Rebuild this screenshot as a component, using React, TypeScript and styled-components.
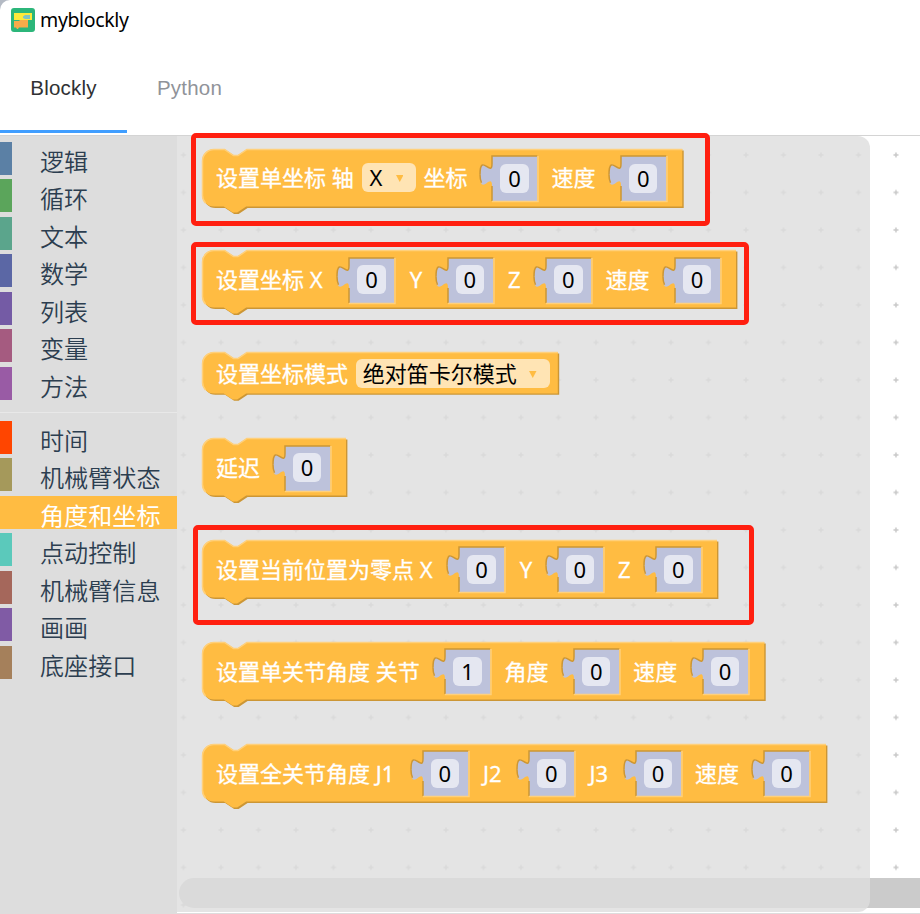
import React from 'react';
import styled, { createGlobalStyle } from 'styled-components';

const ORANGE = '#ffbc42';
const ORANGE_DARK = '#cc9635';
const ORANGE_LIGHT = '#ffd07b';
const SHADOW = '#bdc2db';
const CJK = "'Noto Sans', 'Noto Sans CJK SC', sans-serif";

const GlobalStyle = createGlobalStyle`
  *, *::before, *::after { box-sizing: border-box; }
  body { margin: 0; background: #b4bac4; overflow: hidden; }
`;

const Window = styled.div`
  width: 920px;
  height: 914px;
  display: flex;
  flex-direction: column;
  background: #fff;
  border-top-left-radius: 10px;
  overflow: hidden;
  font-family: ${CJK};
`;

const TitleBar = styled.header`
  height: 42px;
  flex: none;
  display: flex;
  align-items: center;
  gap: 5px;
  padding: 0 0 2px 11px;
  font-size: 19.5px;
  color: #000;

  svg { flex: none; }
`;

const AppName = styled.span`
  line-height: 24px;
  letter-spacing: -0.35px;
`;

const TabBar = styled.nav`
  height: 93px;
  flex: none;
  display: flex;
  padding-bottom: 2px;
`;

const Tab = styled.button<{ $active?: boolean }>`
  width: ${(p) => (p.$active ? 127 : 125)}px;
  border: 0;
  border-bottom: 3px solid ${(p) => (p.$active ? '#409eff' : 'transparent')};
  background: none;
  padding: 4px 0 0;
  font: 20.5px 'Liberation Sans', Arial, sans-serif;
  letter-spacing: 0.2px;
  color: ${(p) => (p.$active ? '#303133' : '#909399')};
`;

const Main = styled.main`
  height: 779px;
  display: flex;
`;

const Toolbox = styled.aside`
  width: 177px;
  flex: none;
  background: #ddd;
  border-top: 1px solid #d4d4d4;
  padding-top: 5.6px;
`;

const Category = styled.div<{ $color: string; $selected?: boolean }>`
  height: 33px;
  margin-bottom: 4.5px;
  display: flex;
  align-items: center;
  padding: 6px 0 0 28px;
  border-left: 12px solid ${(p) => p.$color};
  background: ${(p) => (p.$selected ? p.$color : 'transparent')};
  color: ${(p) => (p.$selected ? '#fff' : '#2c3e50')};
  font-size: 24.1px;
  font-weight: ${(p) => (p.$selected ? 400 : 350)};
  line-height: 33px;
  white-space: nowrap;
`;

const Divider = styled.hr`
  height: 1px;
  margin: 12px 0 8px;
  border: 0;
  background: #e8e8e8;
`;

const Workspace = styled.section`
  position: relative;
  flex: 1;
  border-top: 1.5px solid #d4d4d4;
  border-bottom: 1.5px solid #ddd;
  background: #fff;
`;

const Grid = styled.svg`
  position: absolute;
  inset: 0;
  width: 100%;
  height: 100%;
`;

const Scrollbar = styled.div`
  position: absolute;
  left: 1.5px;
  right: -20px;
  bottom: 5px;
  height: 30px;
  border-radius: 15px;
  background: #cbcbcb;
`;

const WorkspaceClip = styled.div`
  position: absolute;
  inset: 0;
  overflow: hidden;
`;

const Flyout = styled.div`
  position: relative;
  width: 693px;
  height: 776px;
  padding: 12.5px 0 0 24.5px;
  display: flex;
  flex-direction: column;
  align-items: flex-start;
  gap: 44.3px;
  background: rgba(221, 221, 221, 0.8);
  border-radius: 0 12px 12px 0;
`;

const BlockBody = styled.div<{ $height: number; $width: number }>`
  position: relative;
  display: flex;
  align-items: flex-start;
  width: ${(p) => p.$width}px;
  height: ${(p) => p.$height}px;
  padding-left: 14.5px;
`;

const BlockShape = styled.svg`
  position: absolute;
  left: 0;
  top: 0;
  overflow: visible;
`;

const Label = styled.span<{ $width: number; $top: number; $indent: number }>`
  position: relative;
  width: ${(p) => p.$width}px;
  margin-top: ${(p) => p.$top}px;
  text-indent: ${(p) => p.$indent}px;
  flex: none;
  font-size: 22px;
  line-height: 30px;
  color: #fff;
  -webkit-text-stroke: 0.3px #fff;
  white-space: pre;
`;

const Dropdown = styled.span<{ $width: number; $top: number }>`
  position: relative;
  width: ${(p) => p.$width}px;
  height: 29px;
  margin: ${(p) => p.$top}px 7.5px 0;
  padding: 0 13px 0 7.3px;
  flex: none;
  display: flex;
  align-items: center;
  justify-content: space-between;
  border-radius: 6px;
  background: #ffe4b4;
  font-size: 22px;
  line-height: 29px;
  color: #000;
  white-space: nowrap;

  svg { margin-top: 2px; }
`;

const Socket = styled.span`
  position: relative;
  width: 45.3px;
  height: 45px;
  margin: 7.6px 14px 0 25px;
  flex: none;
  display: flex;
  padding: 7.5px 0 0 8px;
`;

const SocketShape = styled.svg`
  position: absolute;
  left: 0;
  top: 0;
  overflow: visible;
`;

const NumberField = styled.span`
  position: relative;
  width: 28.5px;
  height: 29px;
  border-radius: 6px;
  background: #e5e7f1;
  color: #000;
  font-size: 22px;
  line-height: 29px;
  text-align: center;
`;

const Highlight = styled.div<{ $x: number; $y: number; $w: number; $h: number }>`
  position: absolute;
  left: ${(p) => p.$x}px;
  top: ${(p) => p.$y}px;
  width: ${(p) => p.$w}px;
  height: ${(p) => p.$h}px;
  border: 5px solid #ff1f10;
  border-radius: 5px;
  pointer-events: none;
`;

type Part =
  | { kind: 'label'; text: string; width: number }
  | { kind: 'menu'; text: string; width: number }
  | { kind: 'number'; value: string };

const label = (text: string, width: number): Part => ({ kind: 'label', text, width });
const menu = (text: string, width: number): Part => ({ kind: 'menu', text, width });
const num = (value = '0'): Part => ({ kind: 'number', value });

interface BlockData {
  width: number;
  height: number;
  parts: Part[];
}

const blocks: BlockData[] = [
  {
    width: 480.3,
    height: 57.6,
    parts: [label('设置单坐标 轴', 138.6), menu('X', 54), label('坐标', 43.7), num(), label('速度', 44.4), num()],
  },
  {
    width: 534,
    height: 57.6,
    parts: [label('设置坐标 X', 108.3), num(), label('Y', 14), num(), label('Z', 14.2), num(), label('速度', 44.4), num()],
  },
  { width: 355.8, height: 41.4, parts: [label('设置坐标模式', 132), menu('绝对笛卡尔模式', 194)] },
  { width: 144, height: 57.6, parts: [label('延迟', 43.7), num()] },
  {
    width: 515,
    height: 57.6,
    parts: [label('设置当前位置为零点 X', 218.3), num(), label('Y', 14), num(), label('Z', 14.2), num()],
  },
  {
    width: 562.3,
    height: 57.6,
    parts: [label('设置单关节角度 关节', 204.3), num('1'), label('角度', 44.4), num(), label('速度', 44.4), num()],
  },
  {
    width: 624,
    height: 57.6,
    parts: [
      label('设置全关节角度 J1', 181.5),
      num(),
      label('J2', 22.3),
      num(),
      label('J3', 22.3),
      num(),
      label('速度', 44.4),
      num(),
    ],
  },
];

const outline = (w: number, h: number) =>
  `M0,12 A12,12 0 0 1 12,0 H22.5 l9,6 h4.5 l9,-6 H${w} V${h} H44.2 l-9,6 h-4.5 l-9,-6 H12 a12,12 0 0 1 -12,-12 Z`;

const Block = ({ width, height, parts }: BlockData) => {
  const short = height < 50;
  const labelTop = short ? 5.8 : 13.9;
  return (
    <BlockBody $width={width} $height={height}>
      <BlockShape width={width} height={height + 8}>
        <path d={outline(width, height)} fill={ORANGE_DARK} transform="translate(1.4 1.4)" />
        <path d={outline(width, height)} fill={ORANGE} />
        <path
          d={`M3.5,${height - 3.5} A12,12 0 0 1 .5,${height - 12} V12 A11.5,11.5 0 0 1 12,.5 H22.5 l9,6 h4.5 l9,-6 H${width}`}
          fill="none"
          stroke={ORANGE_LIGHT}
          strokeWidth="1.5"
        />
      </BlockShape>
      {parts.map((part, i) => {
        if (part.kind === 'label') {
          return (
            <Label key={i} $width={part.width} $top={labelTop} $indent={i > 0 && part.width < 30 ? 1.2 : 0}>
              {part.text}
            </Label>
          );
        }
        if (part.kind === 'menu') {
          return (
            <Dropdown key={i} $width={part.width} $top={short ? 6.6 : 14.3}>
              <span>{part.text}</span>
              <svg width="7.5" height="7" viewBox="0 0 7.5 7">
                <path d="M0,0 H7.5 L3.75,7 Z" fill={ORANGE} />
              </svg>
            </Dropdown>
          );
        }
        return (
          <Socket key={i}>
            <SocketShape width="46" height="45">
              <path
                d="M0,0 H45.3 V45 H0 V30 c0,-15 -12,12 -12,-11.25 s12,3.75 12,-11.25 Z"
                fill={SHADOW}
              />
              <path
                d="M45.3,0 H0 V7.5 c0,15 -12,-12 -12,11.25"
                fill="none"
                stroke={ORANGE_DARK}
                strokeWidth="1.5"
              />
              <path d="M-12,18.75 q0,5 1.5,8 M0,30 V45" fill="none" stroke={ORANGE_DARK} strokeWidth="1.5" />
              <path d="M46,0 V45.5 H0" fill="none" stroke={ORANGE_LIGHT} strokeWidth="1.5" />
            </SocketShape>
            <NumberField>{part.value}</NumberField>
          </Socket>
        );
      })}
    </BlockBody>
  );
};

const basics: [string, string][] = [
  ['逻辑', '#5b80a5'],
  ['循环', '#5ba55b'],
  ['文本', '#5ba58c'],
  ['数学', '#5b67a5'],
  ['列表', '#745ba5'],
  ['变量', '#a55b80'],
  ['方法', '#995ba5'],
];

const robot: [string, string][] = [
  ['时间', '#ff4500'],
  ['机械臂状态', '#a5995b'],
  ['角度和坐标', ORANGE],
  ['点动控制', '#5bc9bb'],
  ['机械臂信息', '#a5675b'],
  ['画画', '#805ba5'],
  ['底座接口', '#a5805b'],
];

const Logo = () => (
  <svg width="24" height="24" viewBox="0 0 24 24">
    <rect width="24" height="24" rx="3" fill="#2cb67a" />
    <path d="M3,5 H21 V12 H3 Z" fill="#fdea3a" />
    <path d="M12,8.5 l2,-1.5 h5 v4 h-5 l-2,-1 Z" fill="#7fc4c4" />
    <path d="M3,13 H8 l1,-1 H17 V19.5 H8 l-1,1.5 H6 L5,19.5 H3 Z" fill="#f8ab4a" />
  </svg>
);

export default function App() {
  return (
    <>
      <GlobalStyle />
      <Window>
        <TitleBar>
          <Logo />
          <AppName>myblockly</AppName>
        </TitleBar>
        <TabBar>
          <Tab $active>Blockly</Tab>
          <Tab>Python</Tab>
        </TabBar>
        <Main>
          <Toolbox>
            {basics.map(([name, color]) => (
              <Category key={name} $color={color}>
                {name}
              </Category>
            ))}
            <Divider />
            {robot.map(([name, color]) => (
              <Category key={name} $color={color} $selected={color === ORANGE}>
                {name}
              </Category>
            ))}
          </Toolbox>
          <Workspace>
            <WorkspaceClip>
              <Grid>
                <defs>
                  <pattern id="dots" x="-12.3" y="0.2" width="37.5" height="37.5" patternUnits="userSpaceOnUse">
                    <path d="M16.25,18.75 H21.25 M18.75,16.25 V21.25" stroke="#c8c8c8" strokeWidth="1.5" />
                  </pattern>
                </defs>
                <rect width="100%" height="100%" fill="url(#dots)" />
              </Grid>
              <Scrollbar />
            </WorkspaceClip>
            <Flyout>
              {blocks.map((block, i) => (
                <Block key={i} {...block} />
              ))}
            </Flyout>
            <Highlight $x={14} $y={-3} $w={519} $h={93} />
            <Highlight $x={14} $y={106} $w={558} $h={83} />
            <Highlight $x={16} $y={389} $w={561} $h={100} />
          </Workspace>
        </Main>
      </Window>
    </>
  );
}
